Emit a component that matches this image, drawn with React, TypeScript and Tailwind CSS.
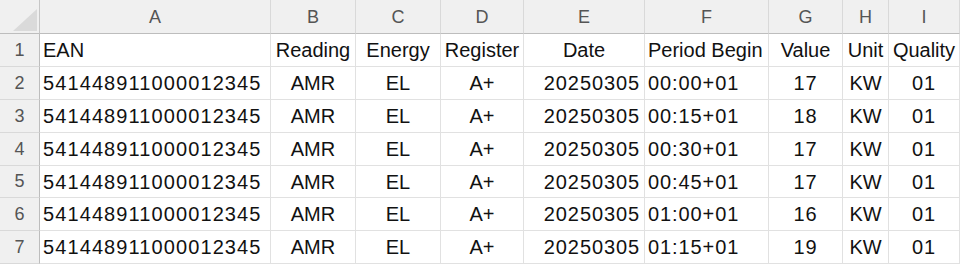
import React from "react";

const cols = ["A", "B", "C", "D", "E", "F", "G", "H", "I"];
const headers = ["EAN", "Reading", "Energy", "Register", "Date", "Period Begin", "Value", "Unit", "Quality"];
const times = ["00:00+01", "00:15+01", "00:30+01", "00:45+01", "01:00+01", "01:15+01"];
const values = ["17", "18", "17", "17", "16", "19"];

const rowHeights = ["h-[33px]", "h-[33px]", "h-[33px]", "h-[33px]", "h-[32px]", "h-[33px]", "h-[33px]"];

const align = [
  "justify-start pl-[3px] tracking-[1.1px]",
  "justify-center",
  "justify-center",
  "justify-center",
  "justify-end pr-[4px] tracking-[0.9px]",
  "justify-start pl-[3px] tracking-[0.9px]",
  "justify-center tracking-[0.9px]",
  "justify-center",
  "justify-center tracking-[0.9px]",
];

const headerAlign = [
  "justify-start pl-[3px]",
  "justify-center",
  "justify-center",
  "justify-center",
  "justify-center",
  "justify-start pl-[3px]",
  "justify-center",
  "justify-center",
  "justify-center",
];

export default function App() {
  const data = times.map((t, i) => [
    "541448911000012345",
    "AMR",
    "EL",
    "A+",
    "20250305",
    t,
    values[i],
    "KW",
    "01",
  ]);

  return (
    <div
      className="w-[960px] h-[264px] overflow-hidden bg-white text-[#111111]"
      style={{ fontFamily: '"Liberation Sans", Arial, sans-serif' }}
    >
      <div className="grid grid-cols-[40px_231px_85px_85px_83px_121px_124px_74px_46px_71px]">
        {/* Corner */}
        <div className="h-[34px] bg-[#f0f0f0] border-r border-b border-r-[#c6c6c6] border-b-[#bdbdbd] flex items-end justify-end">
          <svg width="24" height="22" viewBox="0 0 24 22" className="mb-[2px] mr-[2px]">
            <polygon points="24,0 24,22 0,22" fill="#dadada" />
          </svg>
        </div>
        {cols.map((c) => (
          <div
            key={c}
            className="h-[34px] bg-[#f0f0f0] border-r border-b border-r-[#d9d9d9] border-b-[#bdbdbd] flex items-center justify-center text-[18px] text-[#555555] pt-[1px]"
          >
            {c}
          </div>
        ))}

        {/* Row 1 */}
        <div
          className={`${rowHeights[0]} bg-[#f0f0f0] border-r border-b border-r-[#bdbdbd] border-b-[#d9d9d9] flex items-center justify-center text-[18px] text-[#555555]`}
        >
          1
        </div>
        {headers.map((h, j) => (
          <div
            key={h}
            className={`${rowHeights[0]} border-r border-b border-[#e1e1e1] flex items-center whitespace-nowrap overflow-visible text-[20px] ${headerAlign[j]}`}
          >
            {h}
          </div>
        ))}

        {data.map((row, i) => (
          <React.Fragment key={i}>
            <div
              className={`${rowHeights[i + 1]} bg-[#f0f0f0] border-r border-b border-r-[#bdbdbd] border-b-[#d9d9d9] flex items-center justify-center text-[18px] text-[#555555]`}
            >
              {i + 2}
            </div>
            {row.map((v, j) => (
              <div
                key={j}
                className={`${rowHeights[i + 1]} border-r border-b border-[#e1e1e1] flex items-center whitespace-nowrap text-[20px] ${align[j]}`}
              >
                {v}
              </div>
            ))}
          </React.Fragment>
        ))}
      </div>
    </div>
  );
}
